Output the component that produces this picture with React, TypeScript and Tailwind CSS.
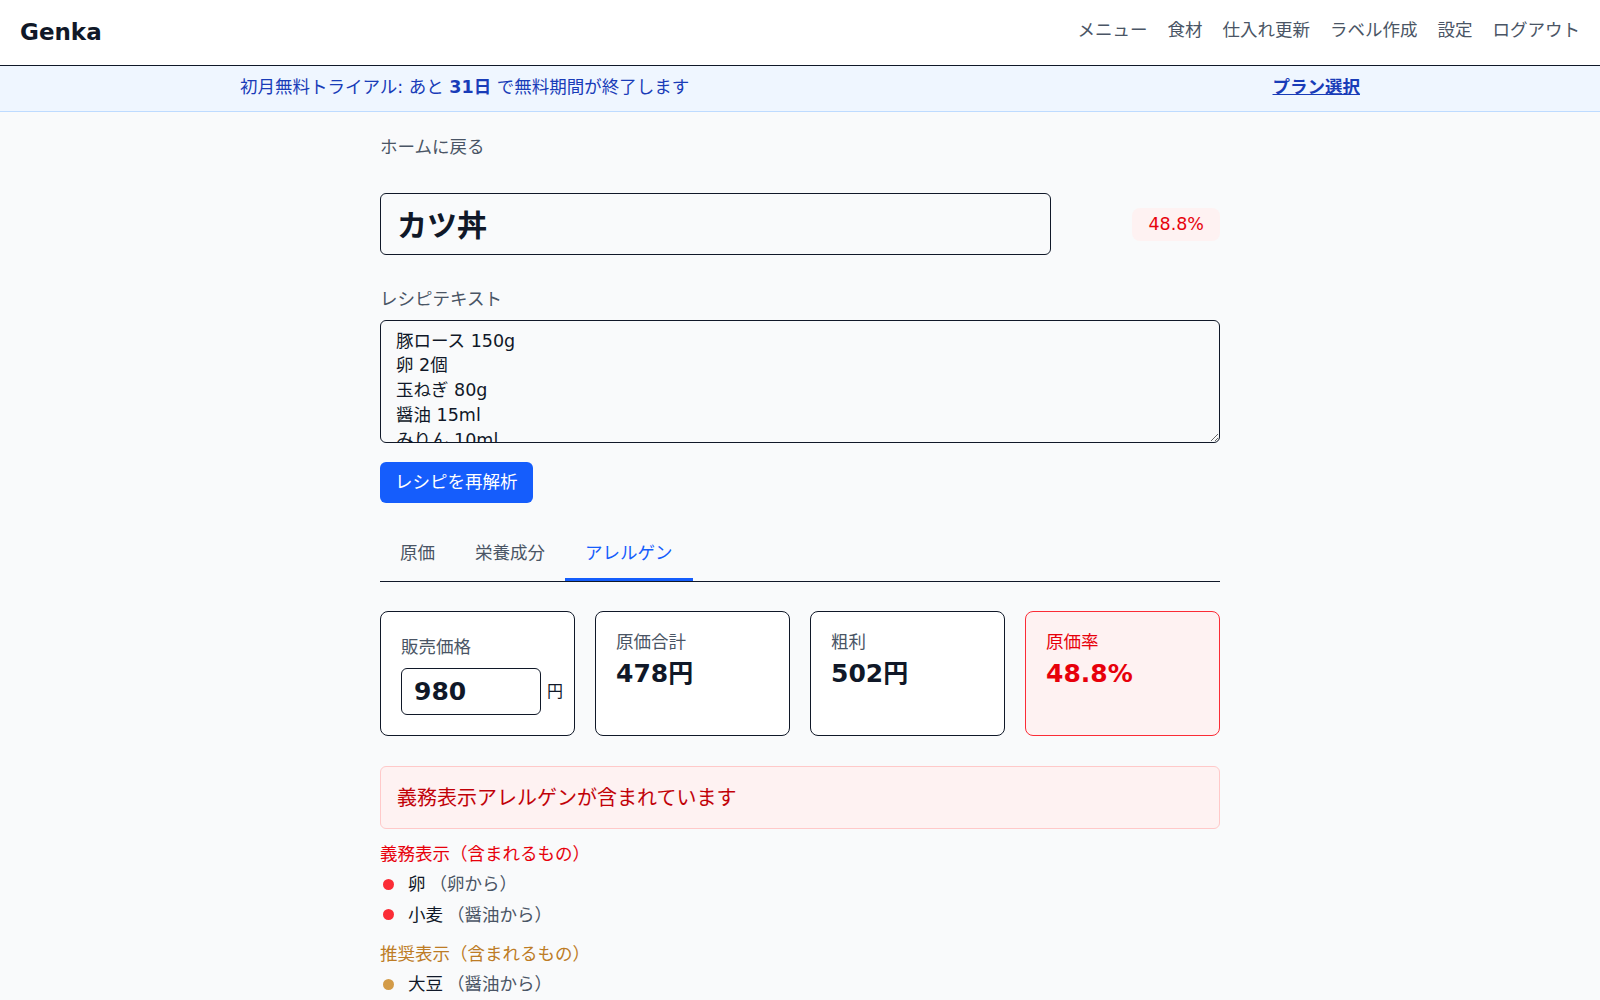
import { useState } from "react";

const nav = ["メニュー", "食材", "仕入れ更新", "ラベル作成", "設定", "ログアウト"];
const tabs = ["原価", "栄養成分", "アレルゲン"];

const recipe = `豚ロース 150g
卵 2個
玉ねぎ 80g
醤油 15ml
みりん 10ml
砂糖 5g
パン粉 20g
ご飯 200g`;

export default function App() {
  const [price, setPrice] = useState("980");
  const [tab, setTab] = useState("アレルゲン");

  return (
    <div className="min-h-screen bg-gray-50 font-['DejaVu_Sans','Noto_Sans_CJK_JP',sans-serif] text-[17.5px] text-gray-900">
      <header className="flex h-[66px] items-center justify-between border-b border-gray-900 bg-white px-5">
        <span className="text-[23px] font-bold">Genka</span>
        <nav className="mb-[4px] flex gap-5 text-gray-600">
          {nav.map((n) => (
            <a key={n} href="#">
              {n}
            </a>
          ))}
        </nav>
      </header>

      <div className="border-b border-blue-200 bg-blue-50">
        <div className="mx-auto flex h-[45px] max-w-[1152px] items-center justify-between px-4 pb-[3px] text-blue-800">
          <p>
            初月無料トライアル: あと <b>31日</b> で無料期間が終了します
          </p>
          <a href="#" className="font-bold underline">
            プラン選択
          </a>
        </div>
      </div>

      <main className="mx-auto w-[840px] pt-[22px] pb-10">
        <a href="#" className="text-gray-600">
          ホームに戻る
        </a>

        <div className="mt-[33px] flex items-center justify-between">
          <input
            defaultValue="カツ丼"
            className="h-[62px] w-[671px] rounded-md border px-4 pb-[3px] text-[30px] font-bold"
          />
          <span className="inline-block rounded-lg bg-red-50 px-4 py-[3.5px] text-red-600">48.8%</span>
        </div>

        <label className="mt-[31px] block text-gray-600">レシピテキスト</label>
        <textarea
          defaultValue={recipe}
          className="mt-[7px] block h-[123px] w-full rounded-md border px-[15px] py-2 text-[17.5px] leading-[24.75px]"
        />

        <button className="mt-[19px] h-[41px] rounded-md bg-blue-600 px-[15px] text-white">レシピを再解析</button>

        <div className="mt-[27px] flex border-b">
          {tabs.map((t) => (
            <button
              key={t}
              onClick={() => setTab(t)}
              className={
                t === tab
                  ? "border-b-[3px] border-blue-600 px-5 pt-[10px] pb-[12px] text-blue-600"
                  : "border-b-[3px] border-transparent px-5 pt-[10px] pb-[12px] text-gray-600"
              }
            >
              {t}
            </button>
          ))}
        </div>

        <div className="mt-[29px] grid grid-cols-4 gap-5">
          <div className="rounded-lg border bg-white px-5 pt-[22px] pb-[20px]">
            <p className="text-gray-600">販売価格</p>
            <div className="mt-2 flex items-center gap-1.5">
              <input
                value={price}
                onChange={(e) => setPrice(e.target.value)}
                className="h-[47px] w-[140px] rounded-md border px-3 text-[25px] font-bold"
              />
              <span className="text-[16px]">円</span>
            </div>
          </div>
          <div className="rounded-lg border bg-white px-5 pt-[17px]">
            <p className="text-gray-600">原価合計</p>
            <p className="text-[25px] leading-[38px] font-bold">478円</p>
          </div>
          <div className="rounded-lg border bg-white px-5 pt-[17px]">
            <p className="text-gray-600">粗利</p>
            <p className="text-[25px] leading-[38px] font-bold">502円</p>
          </div>
          <div className="rounded-lg border border-red-500 bg-red-50 px-5 pt-[17px] text-red-600">
            <p>原価率</p>
            <p className="text-[25px] leading-[38px] font-bold">48.8%</p>
          </div>
        </div>

        <div className="mt-[30px] rounded-md border border-red-200 bg-red-50 px-4 py-[16.5px] text-xl text-red-700">
          義務表示アレルゲンが含まれています
        </div>

        <h3 className="mt-3 text-red-600">義務表示（含まれるもの）</h3>
        <ul className="mt-1 flex flex-col gap-1">
          <li className="flex items-center">
            <span className="mr-[14px] ml-[3px] h-[11px] w-[11px] rounded-full bg-red-500" />
            卵 <span className="ml-1 text-gray-600">（卵から）</span>
          </li>
          <li className="flex items-center">
            <span className="mr-[14px] ml-[3px] h-[11px] w-[11px] rounded-full bg-red-500" />
            小麦 <span className="ml-1 text-gray-600">（醤油から）</span>
          </li>
        </ul>

        <h3 className="mt-[13px] text-[#bd7c25]">推奨表示（含まれるもの）</h3>
        <ul className="mt-1 flex flex-col gap-1">
          <li className="flex items-center">
            <span className="mr-[14px] ml-[3px] h-[11px] w-[11px] rounded-full bg-[#d39b48]" />
            大豆 <span className="ml-1 text-gray-600">（醤油から）</span>
          </li>
        </ul>
      </main>
    </div>
  );
}
